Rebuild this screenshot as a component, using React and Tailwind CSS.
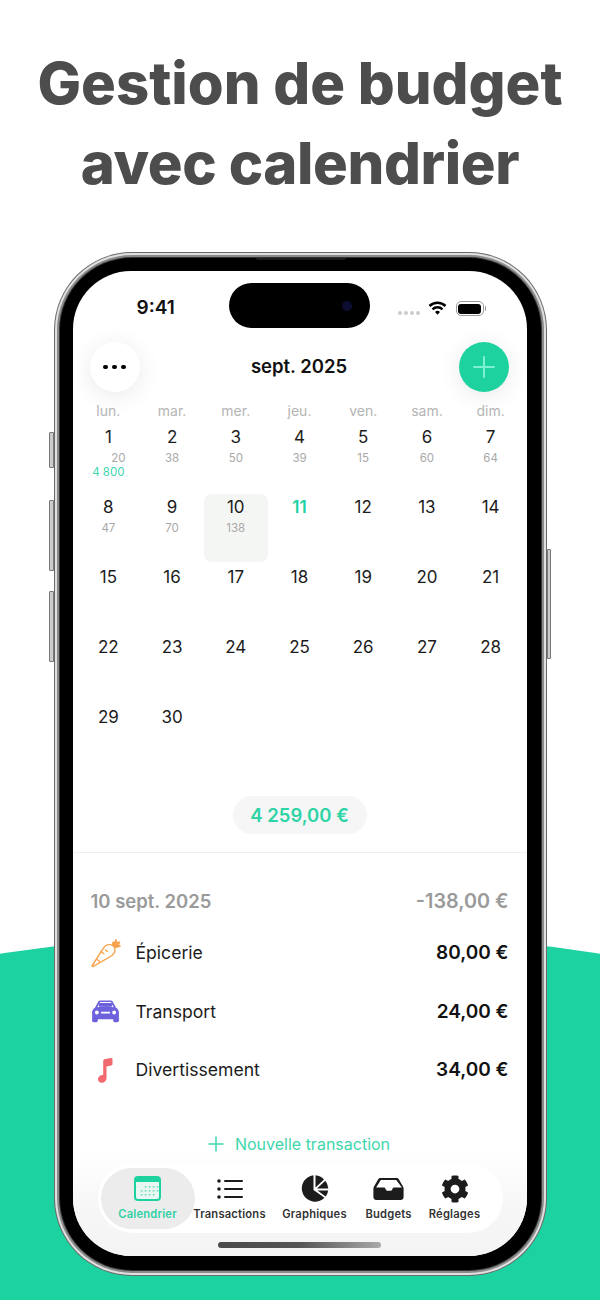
import { Plus } from 'lucide-react'
import { FaCog } from 'react-icons/fa'

const weekdays = ['lun.', 'mar.', 'mer.', 'jeu.', 'ven.', 'sam.', 'dim.']

const spent = { 1: '20', 2: '38', 3: '50', 4: '39', 5: '15', 6: '60', 7: '64', 8: '47', 9: '70', 10: '138' }

const days = Array.from({ length: 30 }, (_, i) => i + 1)

function CarrotIcon() {
    return (
        <svg width="30" height="30" viewBox="0 0 30 30" fill="none" stroke="#f7a24b" strokeWidth="1.400" strokeLinecap="round" strokeLinejoin="round">
            <path d="M1.200 27.500C.8 28.300 1.500 28.900 2.300 28.400L19.500 18.500C22.500 16.700 24.500 13.500 23.800 10.700C23.300 8.500 21.200 6.800 18.700 6.600C16 6.400 13.800 7.800 12.500 10.200z" />
            <path d="M6 21.500l2.500 1.800M10 13.500l3 2.200M14.500 12l2 1.500" />
            <path d="M21.500 7.500C21 5.800 21.500 4.500 22.500 3.500L23.500 5.200L24.800 1.200L26 4.500L29 3.800L27.700 6.500L29.500 8.200L26.500 9.200C25.200 9.800 24 9.500 23.300 9z" fill="#f7a24b" strokeWidth="1" />
        </svg>
    )
}

function CarIcon() {
    return (
        <svg width="29" height="23" viewBox="1 0 28 24" fill="#6e62dc">
            <path fillRule="evenodd" d="M7.500 1.500C8 .8 9 .5 10 .5h10c1 0 2 .3 2.500 1L26 8c1.700 1 3 2.700 3 5v8.500c0 1-.8 1.800-1.800 1.800h-2.400c-1 0-1.800-.8-1.800-1.800V20H7v1.500c0 1-.8 1.800-1.800 1.800H2.800c-1 0-1.800-.8-1.800-1.800V13c0-2.300 1.300-4 3-5zM9 2.500 6.500 7.500c2.500-.5 5.500-.8 8.500-.8s6 .3 8.500.8L21 2.500c-.3-.3-.6-.4-1-.4H10c-.4 0-.7.1-1 .4zM6 11a2 2 0 1 0 0 4 2 2 0 0 0 0-4zm18 0a2 2 0 1 0 0 4 2 2 0 0 0 0-4zM11 12.300c-.5 0-.9.400-.9.900s.4.900.9.900h8c.5 0 .9-.4.9-.9s-.4-.9-.9-.9z" />
            <rect x="8" y="3" width="14" height="4" rx="1" />
        </svg>
    )
}

function NoteIcon() {
    return (
        <svg width="16" height="25" viewBox="0 0 16 25" fill="#f26a6f" className="mr-[2px]">
            <path d="M6.200 3.500C6.200 2.200 7 1.300 8.200 1.100L13.800.1C14.800 0 15.500.6 15.500 1.500v4.600c0 .8-.5 1.400-1.300 1.500L9.500 8.500V20c0 2.700-2.200 4.800-4.700 4.800C2.500 24.800 1 23.300 1 21.300c0-2.400 2.200-4.300 4.800-4.300h.4z" />
        </svg>
    )
}

function CalendarIcon() {
    const dots = [
        [11, 10], [15, 10], [19, 10], [23, 10],
        [7, 14], [11, 14], [15, 14], [19, 14], [23, 14],
        [7, 18], [11, 18], [15, 18], [19, 18],
    ]
    return (
        <svg width="27" height="25" viewBox="0 0 27 25">
            <rect x="1" y="1" width="25" height="23" rx="3" fill="#e9f7f2" stroke="#1ed2a0" strokeWidth="2" />
            <path d="M1 6V4a3 3 0 0 1 3-3h19a3 3 0 0 1 3 3v2z" fill="#1ed2a0" />
            {dots.map(([x, y]) => (
                <rect key={`${x}-${y}`} x={x - 0.2} y={y} width="1.600" height="1.600" fill="#6fdcbc" />
            ))}
        </svg>
    )
}

function ListIcon() {
    return (
        <svg width="26" height="20" viewBox="0 0 26 20" fill="#1c1c1c">
            <circle cx="2" cy="2" r="1.800" />
            <circle cx="2" cy="10" r="1.800" />
            <circle cx="2" cy="18" r="1.800" />
            <rect x="7" y="1" width="19" height="2" rx="1" />
            <rect x="7" y="9" width="19" height="2" rx="1" />
            <rect x="7" y="17" width="19" height="2" rx="1" />
        </svg>
    )
}

function PieIcon() {
    return (
        <svg width="28" height="27" viewBox="0 0 28 27" fill="#1c1c1c">
            <path d="M12.500.2A13.300 13.300 0 1 0 23.500 22.800L12.500 15z" />
            <path d="M14.500.2A13.300 13.300 0 0 1 23 4.500L14.500 12.500z" />
            <path d="M24.300 5.800A13.300 13.300 0 0 1 27.300 13.500L16 13.500z" />
            <path d="M27.200 15.500A13.300 13.300 0 0 1 24.600 21.500L16.500 15.500z" />
        </svg>
    )
}

function TrayIcon() {
    return (
        <svg width="31" height="23" viewBox="0 0 31 23" fill="#1c1c1c">
            <path d="M7.500 1h16c1 0 1.800.5 2.300 1.300l4.200 7.200c.4.700.6 1.400.6 2.200V20c0 1.700-1.300 3-3 3H3.400c-1.700 0-3-1.300-3-3v-8.300c0-.8.2-1.500.6-2.200l4.200-7.200C5.700 1.500 6.500 1 7.500 1zm.3 2-4.700 7.500h8c.7 0 1.100.4 1.300 1l.6 1.400c.2.500.6.800 1.200.8h3.600c.6 0 1-.3 1.200-.8l.6-1.400c.2-.6.600-1 1.300-1h8L23.200 3z" />
        </svg>
    )
}

function WifiIcon() {
    return (
        <svg width="19" height="14" viewBox="0 0 18 14" fill="none" stroke="#000" strokeWidth="2.500">
            <path d="M1 5a11.500 11.500 0 0 1 16 0" />
            <path d="M4 8.300a7.200 7.200 0 0 1 10 0" />
            <path d="M9 13.800 6.500 11a3.600 3.600 0 0 1 5 0z" fill="#000" stroke="none" />
        </svg>
    )
}

function TabItem({ width, icon, label, active }) {
    return (
        <div className={`flex flex-col items-center ${width} ${active ? 'h-[61px] justify-center rounded-full bg-[#ececec]' : ''}`}>
            <div className="flex h-[28px] items-center justify-center">{icon}</div>
            <span className={`mt-[3px] text-[11.200px] leading-[16px] font-semibold tracking-[0.2px] ${active ? 'text-[#2fd0a4]' : 'text-[#333]'}`}>{label}</span>
        </div>
    )
}

function Expense({ icon, label, amount }) {
    return (
        <div className="flex h-[58.500px] items-center">
            <div className="flex w-[30px] justify-center">{icon}</div>
            <span className="ml-[15px] text-[17.600px] text-[#1c1c1c]">{label}</span>
            <span className="ml-auto text-[19px] font-semibold text-[#111]">{amount}</span>
        </div>
    )
}

export default function App() {
    return (
        <div className="relative h-[1300px] w-[600px] overflow-hidden bg-white font-['Inter',sans-serif]">
            {/* green backdrop */}
            <div className="absolute top-[931px] left-[-1700px] h-[4000px] w-[4000px] rounded-full bg-[#1cd2a0]" />

            <h1 className="relative h-[252px] pt-[43px] text-center text-[58px] leading-[80px] font-extrabold text-[#4d4d4d]">
                Gestion de budget
                <br />
                <span className="tracking-[-0.4px]">avec calendrier</span>
            </h1>

            {/* phone */}
            <div className="relative mx-auto w-[493px]">
                <div className="absolute top-[180px] left-[-5px] h-[36px] w-[5px] rounded-l-[1px] border border-[#777] bg-[#ccc]" />
                <div className="absolute top-[248px] left-[-5px] h-[71px] w-[5px] rounded-l-[1px] border border-[#777] bg-[#ccc]" />
                <div className="absolute top-[339px] left-[-5px] h-[71px] w-[5px] rounded-l-[1px] border border-[#777] bg-[#ccc]" />
                <div className="absolute top-[297px] right-[-4px] h-[110px] w-[4px] rounded-r-[1px] border border-[#777] bg-[#ccc]" />

                <div className="rounded-[78px] bg-[#6a6a6a] p-[1px]">
                    <div className="rounded-[77px] bg-[#e0e0e0] p-[2px]">
                        <div className="rounded-[75px] bg-[#8a8a8a] p-[2px]">
                            <div className="rounded-[73px] bg-[#333] p-[1px]">
                                <div className="relative h-[1012px] rounded-[72px] bg-black p-[13px]">
                                    <div className="absolute top-0 left-[196px] h-[2px] w-[90px] rounded-b bg-[#1c1c1c]" />
                                    <div className="absolute top-[25px] left-[169px] z-10 flex h-[45px] w-[141px] items-center justify-end rounded-full bg-black pr-[18px]">
                                        <div className="h-[10px] w-[10px] rounded-full bg-[#0d0d33]" />
                                    </div>

                                    {/* screen */}
                                    <div className="relative flex h-[985px] w-[454px] flex-col overflow-hidden rounded-[58px] bg-white">
                                        <div className="relative h-[71px]">
                                            <span className="absolute top-[27px] left-[64px] text-[19px] leading-[20px] font-semibold text-[#111]">9:41</span>
                                            <div className="absolute top-[40px] left-[325px] flex gap-[2px]">
                                                <div className="h-[4px] w-[4px] rounded-full bg-[#ccc]" />
                                                <div className="h-[4px] w-[4px] rounded-full bg-[#ccc]" />
                                                <div className="h-[4px] w-[4px] rounded-full bg-[#ccc]" />
                                                <div className="h-[4px] w-[4px] rounded-full bg-[#ccc]" />
                                            </div>
                                            <div className="absolute top-[30px] left-[355px]"><WifiIcon /></div>
                                            <div className="absolute top-[30px] left-[383px] flex items-center">
                                                <div className="h-[15px] w-[28px] rounded-[5px] border border-[#999] p-[1.500px]">
                                                    <div className="h-full w-full rounded-[3px] bg-black" />
                                                </div>
                                                <div className="ml-[1px] h-[5px] w-[1.500px] rounded-r-sm bg-[#999]" />
                                            </div>
                                        </div>

                                        <div className="flex h-[50px] items-center justify-between pr-[18px] pl-[17px]">
                                            <div className="flex h-[50px] w-[50px] items-center justify-center gap-[4.500px] rounded-full bg-white shadow-[0_4px_24px_rgba(0,0,0,0.09)]">
                                                <div className="h-[4.500px] w-[4.500px] rounded-full bg-black" />
                                                <div className="h-[4.500px] w-[4.500px] rounded-full bg-black" />
                                                <div className="h-[4.500px] w-[4.500px] rounded-full bg-black" />
                                            </div>
                                            <span className="text-[18.500px] font-semibold text-[#111]">sept. 2025</span>
                                            <div className="flex h-[50px] w-[50px] items-center justify-center rounded-full bg-[#1ed2a0] shadow-[0_4px_24px_rgba(0,0,0,0.09)]">
                                                <Plus size={34} strokeWidth={1.400} className="text-[#7ff0d0]" />
                                            </div>
                                        </div>

                                        {/* calendar */}
                                        <div className="grid grid-cols-7 px-[4px] pt-[9px]">
                                            {weekdays.map(d => (
                                                <div key={d} className="h-[23px] text-center text-[14px] leading-[20px] text-[#b5b5b5]">{d}</div>
                                            ))}
                                        </div>
                                        <div className="grid grid-cols-7 px-[4px]">
                                            {days.map(day => (
                                                <div key={day} className="flex h-[70px] flex-col items-center">
                                                    <div className={`flex h-[68px] w-[64px] flex-col items-center rounded-lg pt-[2px] ${day === 10 ? 'bg-[#f4f6f3]' : ''}`}>
                                                        <span className={`text-[17px] leading-[22px] ${day === 11 ? 'font-semibold text-[#1ed2a0]' : 'text-[#1c1c1c]'}`}>{day}</span>
                                                        {spent[day] && (
                                                            <span className={`mt-[3px] text-[11.500px] leading-[14px] text-[#a8a8a8] ${day === 1 ? 'relative left-[10px]' : ''}`}>{spent[day]}</span>
                                                        )}
                                                        {day === 1 && <span className="text-[11.500px] leading-[14px] text-[#3ed6ac]">4 800</span>}
                                                    </div>
                                                </div>
                                            ))}
                                        </div>

                                        <div className="mt-[22px] flex justify-center">
                                            <div className="flex h-[38px] w-[134px] items-center justify-center rounded-full bg-[#f6f6f6] pt-[1px] text-[18.500px] font-semibold text-[#2fd4a6]">4 259,00 €</div>
                                        </div>
                                        <div className="mt-[18px] h-px bg-[#eeeeee]" />

                                        <div className="px-[18px]">
                                            <div className="mt-[37px] flex h-[24px] items-center justify-between text-[18.500px] font-semibold text-[#9a9a9a]">
                                                <span>10 sept. 2025</span>
                                                <span className="text-[19.800px]">-138,00 €</span>
                                            </div>
                                            <div className="mt-[10px]">
                                                <Expense icon={<CarrotIcon />} label="Épicerie" amount="80,00 €" />
                                                <Expense icon={<CarIcon />} label="Transport" amount="24,00 €" />
                                                <Expense icon={<NoteIcon />} label="Divertissement" amount="34,00 €" />
                                            </div>
                                        </div>

                                        <div className="mt-[32px] flex items-center justify-center pr-[5px] text-[16px] text-[#3ed6ac]">
                                            <Plus size={24} strokeWidth={1.500} />
                                            <span className="ml-[7px]">Nouvelle transaction</span>
                                        </div>

                                        {/* bottom bar */}
                                        <div className="absolute right-0 bottom-0 left-0 h-[105px] bg-gradient-to-b from-transparent via-[#f7f7f7] to-[#f4f4f4]">
                                            <div className="mt-[12px] ml-[25px] flex h-[70px] w-[405px] items-center rounded-[35px] bg-white pl-[3px]">
                                                <TabItem width="w-[94px]" icon={<CalendarIcon />} label="Calendrier" active />
                                                <TabItem width="w-[70px]" icon={<ListIcon />} label="Transactions" />
                                                <TabItem width="w-[100px]" icon={<PieIcon />} label="Graphiques" />
                                                <TabItem width="w-[48px]" icon={<TrayIcon />} label="Budgets" />
                                                <TabItem width="w-[84px]" icon={<FaCog size={28} color="#1c1c1c" />} label="Réglages" />
                                            </div>
                                            <div className="mx-auto mt-[9px] h-[6px] w-[163px] rounded-full bg-gradient-to-r from-[#4a4a4a] via-[#555] to-[#aaa]" />
                                        </div>
                                    </div>
                                </div>
                            </div>
                        </div>
                    </div>
                </div>
            </div>
        </div>
    )
}
